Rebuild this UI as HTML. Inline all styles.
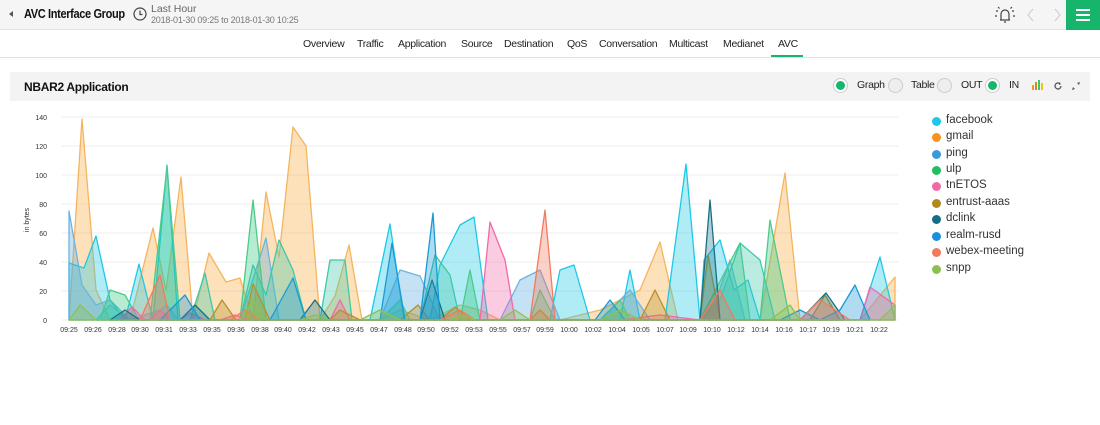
<!DOCTYPE html>
<html><head><meta charset="utf-8"><style>
*{margin:0;padding:0;box-sizing:border-box}
body{width:1100px;height:425px;background:#fff;font-family:"Liberation Sans",sans-serif;overflow:hidden;position:relative;color:#222}
.top{position:absolute;left:0;top:0;width:1100px;height:30px;background:#f5f5f6;border-bottom:1px solid #e4e4e4}
.tabs{position:absolute;left:0;top:30px;width:1100px;height:28px;border-bottom:1px solid #e2e2e2}
.tabs span{position:absolute;top:8px;font-size:10.5px;color:#222;letter-spacing:-0.3px}
.panel{position:absolute;left:10px;top:72px;width:1080px;height:29px;background:#f3f3f4}
.leg{position:absolute;left:932px;font-size:11.5px;color:#333}
.leg i{position:absolute;left:0;top:3px;width:9px;height:9px;border-radius:50%}
.leg span{position:absolute;left:14px;top:0;white-space:nowrap}
.rad{position:absolute;top:78px;width:15px;height:15px;border-radius:50%;border:1px solid #ccc;background:#eee}
.rad.on{background:#fff}
.rad.on:after{content:"";position:absolute;left:2px;top:2px;width:9px;height:9px;border-radius:50%;background:#15b86a}
.lbl{position:absolute;top:79px;font-size:10.5px;color:#222;letter-spacing:-0.3px}
</style></head><body>
<div class="top"></div>
<div style="position:absolute;left:9px;top:11px;width:0;height:0;border-top:3px solid transparent;border-bottom:3px solid transparent;border-right:4px solid #555"></div>
<div style="position:absolute;left:24px;top:7px;font-size:12.5px;font-weight:bold;color:#111;letter-spacing:-0.4px;transform:scaleX(0.88);transform-origin:left;white-space:nowrap">AVC Interface Group</div>
<svg style="position:absolute;left:133px;top:7px" width="14" height="14"><circle cx="7" cy="7" r="6" fill="none" stroke="#444" stroke-width="1.2"/><path d="M7 3.5V7.5H9.5" fill="none" stroke="#444" stroke-width="1.2"/></svg>
<div style="position:absolute;left:151px;top:3px;font-size:10.5px;color:#666">Last Hour</div>
<div style="position:absolute;left:151px;top:15px;font-size:9px;color:#777;letter-spacing:-0.2px">2018-01-30 09:25 to 2018-01-30 10:25</div>
<svg style="position:absolute;left:993px;top:5px" width="24" height="20"><path d="M8 15V9a4 4 0 0 1 8 0v6H7h10M11 17h2" fill="none" stroke="#444" stroke-width="1.2"/><path d="M3 6h2M19 6h2M5 2l1.5 1.5M19 2l-1.5 1.5M2 11h2M20 11h2" stroke="#444" stroke-width="1.2"/></svg>
<svg style="position:absolute;left:1026px;top:8px" width="36" height="14"><path d="M7 1L2 7l5 6M29 1l5 6-5 6" fill="none" stroke="#ccc" stroke-width="1"/></svg>
<div style="position:absolute;left:1066px;top:0;width:34px;height:30px;background:#17b56b"></div>
<div style="position:absolute;left:1076px;top:9px;width:14px;height:2px;background:#fff;box-shadow:0 5px 0 #fff,0 10px 0 #fff"></div>
<div class="tabs">
<span style="left:303px">Overview</span><span style="left:357px">Traffic</span><span style="left:398px">Application</span><span style="left:461px">Source</span><span style="left:504px">Destination</span><span style="left:567px">QoS</span><span style="left:599px">Conversation</span><span style="left:669px">Multicast</span><span style="left:723px">Medianet</span><span style="left:778px">AVC</span>
<div style="position:absolute;left:771px;top:25px;width:32px;height:2px;background:#17b56b"></div>
</div>
<div class="panel"></div>
<div style="position:absolute;left:24px;top:80px;font-size:12px;font-weight:bold;color:#111;letter-spacing:-0.3px">NBAR2 Application</div>
<div class="rad on" style="left:833px"></div><div class="lbl" style="left:857px">Graph</div>
<div class="rad" style="left:888px"></div><div class="lbl" style="left:911px">Table</div>
<div class="rad" style="left:937px"></div><div class="lbl" style="left:961px">OUT</div>
<div class="rad on" style="left:985px"></div><div class="lbl" style="left:1009px">IN</div>
<svg style="position:absolute;left:1031px;top:79px" width="12" height="12"><rect x="1" y="6" width="2" height="5" fill="#f39c12"/><rect x="4" y="3" width="2" height="8" fill="#e67e22"/><rect x="7" y="1" width="2" height="10" fill="#2ecc71"/><rect x="10" y="4" width="2" height="7" fill="#f1c40f"/></svg>
<svg style="position:absolute;left:1053px;top:81px" width="10" height="10"><path d="M8 5a3 3 0 1 1-1-2.3" fill="none" stroke="#555" stroke-width="1.3"/><path d="M6 1l2 2-2 1" fill="#555"/></svg>
<svg style="position:absolute;left:1072px;top:82px" width="8" height="8"><path d="M0 8l3-1-2-2zM8 0L5 1l2 2z" fill="#555"/></svg>

<svg style="position:absolute;left:0;top:100px" width="920" height="245" font-family="Liberation Sans,sans-serif" font-size="7" fill="#333">
<g stroke="#eee" stroke-width="1">
<line x1="62" x2="898" y1="17" y2="17"/><line x1="62" x2="898" y1="46" y2="46"/><line x1="62" x2="898" y1="75" y2="75"/><line x1="62" x2="898" y1="104" y2="104"/><line x1="62" x2="898" y1="133" y2="133"/><line x1="62" x2="898" y1="162" y2="162"/><line x1="62" x2="898" y1="191" y2="191"/><line x1="62" x2="898" y1="220" y2="220"/>
</g>
<g text-anchor="end"><text x="47" y="20">140</text><text x="47" y="49">120</text><text x="47" y="78">100</text><text x="47" y="107">80</text><text x="47" y="136">60</text><text x="47" y="165">40</text><text x="47" y="194">20</text><text x="47" y="223">0</text></g>
<text transform="translate(29,120) rotate(-90)" text-anchor="middle">in bytes</text>
<g stroke-width="1.3" stroke-linejoin="round" fill-opacity="0.35">
<polygon fill="#f7a93b" stroke="#f5b55e" points="69,220 82,19 96,190 110,220 130,220 153,128 166,190 181,77 193,220 209,153 226,182 240,178 253,220 266,92 279,157 293,27 306,46 320,220 335,196 349,145 362,220 380,220 400,210 430,220 460,205 480,210 500,220 560,220 600,210 640,190 660,142 678,220 700,220 760,220 785,73 800,220 860,220 895,177 895,220"/>
<polygon fill="#1ec8e6" stroke="#1ec8e6" points="69,220 69,163 84,168 96,136 110,200 125,220 139,164 153,220 167,65 178,220 370,220 390,124 404,220 430,220 440,165 460,125 474,117 488,220 550,220 560,170 574,165 590,220 620,220 630,170 640,220 665,220 686,64 700,220 704,160 720,140 734,190 748,180 760,220 860,220 880,157 895,220"/>
<polygon fill="#5aabe0" stroke="#6eb3e0" points="69,220 69,111 82,185 96,205 110,200 130,220 160,210 167,205 178,220 240,220 266,138 279,220 380,220 400,170 420,176 440,220 500,220 520,180 540,170 560,220 600,220 630,190 650,220 700,220 716,200 730,160 745,220"/>
<polygon fill="#2ec97a" stroke="#4ec98a" points="100,220 110,190 125,195 139,220 150,220 167,67 180,220 240,220 253,100 266,220 380,220 400,200 410,220 460,220 470,170 480,220 530,220 540,190 555,220 600,220 620,200 630,220 700,220 740,143 750,220 760,220 770,120 790,220"/>
<polygon fill="#3fc8a8" stroke="#3fc8a8" points="96,220 110,205 130,220 190,220 205,173 215,220 240,220 253,165 266,195 279,140 293,170 306,220 320,220 330,160 345,160 352,220 420,220 435,155 450,175 460,220 700,220 720,200 740,143 760,160 775,220"/>
<polygon fill="#f06aa8" stroke="#f06aa8" points="120,220 132,207 145,220 150,220 160,210 170,220 180,220 190,213 205,220 220,220 235,215 250,220 330,220 340,200 350,220 480,220 490,122 505,160 515,220 620,220 660,215 700,220 860,220 870,187 895,205 895,220"/>
<polygon fill="#b5922a" stroke="#b5922a" points="210,220 222,200 236,220 245,220 253,184 270,220 330,220 340,210 360,220 400,220 418,205 430,220 440,220 455,207 470,220 530,220 540,210 550,220 640,220 655,190 670,220 700,220 708,155 720,220 810,220 825,195 840,220"/>
<polygon fill="#1b7f94" stroke="#1b6f84" points="110,220 125,210 140,220 180,220 195,205 210,220 300,220 315,200 330,220 420,220 432,180 445,220 700,220 710,100 720,220 800,220 826,193 845,220"/>
<polygon fill="#1a9ad6" stroke="#1a9ad6" points="160,220 185,195 200,220 270,220 293,178 306,220 380,220 392,143 405,220 420,220 433,113 440,220 595,220 610,200 625,220 780,220 800,210 820,220 840,210 855,185 870,220"/>
<polygon fill="#f47a5e" stroke="#f47a5e" points="140,220 160,175 170,220 230,220 245,210 260,220 440,220 460,210 475,220 530,220 545,110 555,220 700,220 720,190 735,220 800,220 820,200 835,210 850,220"/>
<polygon fill="#8cc152" stroke="#8cc152" points="69,220 80,205 96,220 240,220 253,200 266,220 300,220 315,215 330,220 360,220 380,210 400,220 450,220 463,215 475,220 500,220 515,210 530,220 600,220 620,210 640,220 770,220 790,205 800,220 880,220 895,205 895,220"/>
</g>
<g text-anchor="middle">
<text x="69" y="232">09:25</text><text x="93" y="232">09:26</text><text x="117" y="232">09:28</text><text x="140" y="232">09:30</text><text x="164" y="232">09:31</text><text x="188" y="232">09:33</text><text x="212" y="232">09:35</text><text x="236" y="232">09:36</text><text x="260" y="232">09:38</text><text x="283" y="232">09:40</text><text x="307" y="232">09:42</text><text x="331" y="232">09:43</text><text x="355" y="232">09:45</text><text x="379" y="232">09:47</text><text x="403" y="232">09:48</text><text x="426" y="232">09:50</text><text x="450" y="232">09:52</text><text x="474" y="232">09:53</text><text x="498" y="232">09:55</text><text x="522" y="232">09:57</text><text x="545" y="232">09:59</text><text x="569" y="232">10:00</text><text x="593" y="232">10:02</text><text x="617" y="232">10:04</text><text x="641" y="232">10:05</text><text x="665" y="232">10:07</text><text x="688" y="232">10:09</text><text x="712" y="232">10:10</text><text x="736" y="232">10:12</text><text x="760" y="232">10:14</text><text x="784" y="232">10:16</text><text x="808" y="232">10:17</text><text x="831" y="232">10:19</text><text x="855" y="232">10:21</text><text x="879" y="232">10:22</text>
</g>
</svg>

<div class="leg" style="top:114px"><i style="background:#1ec8e6"></i><span>facebook</span></div>
<div class="leg" style="top:130px"><i style="background:#f7931e"></i><span>gmail</span></div>
<div class="leg" style="top:147px"><i style="background:#3a9ad9"></i><span>ping</span></div>
<div class="leg" style="top:163px"><i style="background:#1fbf5f"></i><span>ulp</span></div>
<div class="leg" style="top:179px"><i style="background:#f06aa8"></i><span>tnETOS</span></div>
<div class="leg" style="top:196px"><i style="background:#b08a1a"></i><span>entrust-aaas</span></div>
<div class="leg" style="top:212px"><i style="background:#136f86"></i><span>dclink</span></div>
<div class="leg" style="top:229px"><i style="background:#1a8ee0"></i><span>realm-rusd</span></div>
<div class="leg" style="top:245px"><i style="background:#f47a5e"></i><span>webex-meeting</span></div>
<div class="leg" style="top:262px"><i style="background:#8cc152"></i><span>snpp</span></div>
</body></html>
